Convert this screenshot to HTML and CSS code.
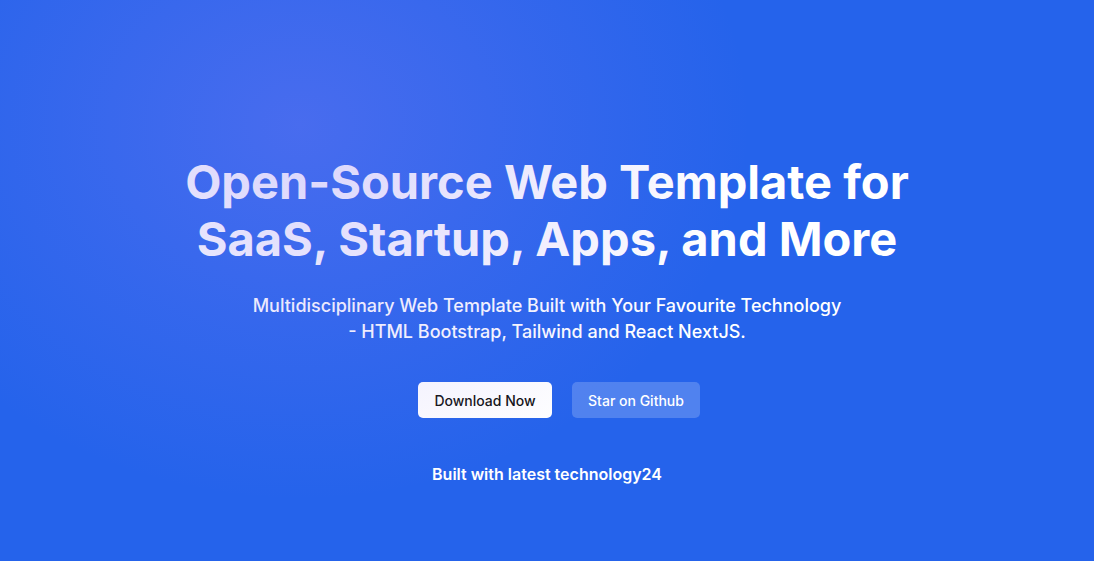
FILE: index.html
```html
<!DOCTYPE html>
<html lang="en">
<head>
<meta charset="utf-8">
<title>Hero</title>
<link rel="stylesheet" href="styles.css">
</head>
<body>
<section class="hero">
  <div class="hero-inner">
    <h1 class="title">Open-Source Web Template for SaaS, Startup, Apps, and More</h1>
    <p class="subtitle">Multidisciplinary Web Template Built with Your Favourite Technology - HTML Bootstrap, Tailwind and React NextJS.</p>
    <div class="actions">
      <a class="btn btn-primary" href="#">Download Now</a>
      <a class="btn btn-ghost" href="#">Star on Github</a>
    </div>
    <p class="built">Built with latest technology24</p>
  </div>
  <div class="glow"></div>
</section>
</body>
</html>
```
FILE: styles.css
```css
* { box-sizing: border-box; }
html, body { margin: 0; padding: 0; }
body {
  font-family: Inter, "Noto Sans", sans-serif;
  background: #2563eb;
  color: #fff;
}
.hero {
  position: relative;
  height: 561px;
  overflow: hidden;
  background: #2563eb;
}
.hero-inner {
  display: flex;
  flex-direction: column;
  align-items: center;
  text-align: center;
  padding-top: 153px;
}
.title {
  margin: 0;
  width: 780px;
  font-size: 47px;
  font-weight: 700;
  line-height: 57px;
  letter-spacing: 0;
}
.subtitle {
  margin: 26px 0 0;
  width: 600px;
  font-size: 18px;
  font-weight: 500;
  line-height: 26px;
}
.actions {
  display: flex;
  gap: 20px;
  margin-top: 37px;
  margin-left: 24px;
}
.btn {
  display: inline-flex;
  align-items: center;
  justify-content: center;
  height: 36px;
  padding: 0 16px;
  border-radius: 5px;
  font-size: 14px;
  font-weight: 500;
  text-decoration: none;
}
.btn-primary {
  background: #fff;
  color: #111;
  width: 134px;
}
.btn-ghost {
  background: rgba(255, 255, 255, 0.2);
  color: #fff;
  width: 128px;
}
.built {
  margin: 44px 0 0;
  font-size: 16px;
  font-weight: 600;
  line-height: 24px;
}
.glow {
  position: absolute;
  left: -150px;
  top: -250px;
  width: 900px;
  height: 750px;
  border-radius: 50%;
  background: radial-gradient(closest-side, rgba(140, 125, 245, 0.34), rgba(140, 125, 245, 0.15) 55%, rgba(140, 125, 245, 0) 100%);
  pointer-events: none;
}
```
